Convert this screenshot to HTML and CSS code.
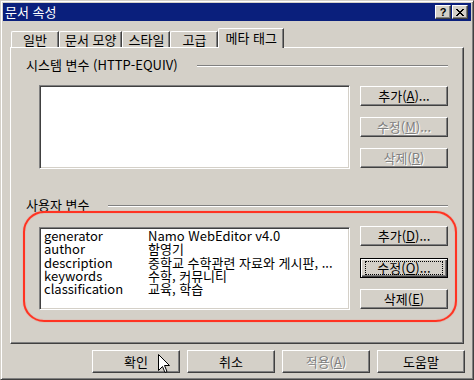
FILE: index.html
```html
<!DOCTYPE html>
<html lang="ko">
<head>
    <meta charset="UTF-8">
    <title>문서 속성</title>
    <link rel="stylesheet" href="styles.css">
</head>
<body>
    <div class="window">
        <div class="titlebar">
            <span class="title">문서 속성</span>
            <div class="title-buttons">
                <span class="tbtn help">?</span>
                <span class="tbtn close">
                    <svg width="8" height="7" viewBox="0 0 8 7"><path d="M0 0h2v1h1v1h2v-1h1v-1h2v1h-1v1h-1v1h-1v1h1v1h1v1h1v1h-2v-1h-1v-1h-2v1h-1v1h-2v-1h1v-1h1v-1h1v-1h-1v-1h-1v-1h-1z" fill="#000"/></svg>
                </span>
            </div>
        </div>

        <div class="tabs">
            <div class="tab">일반</div>
            <div class="tab">문서 모양</div>
            <div class="tab">스타일</div>
            <div class="tab">고급</div>
            <div class="tab active">메타 태그</div>
        </div>

        <div class="panel">
            <!-- system variables -->
            <div class="group">
                <div class="group-title"><span>시스템 변수 (HTTP-EQUIV)</span><i class="etch"></i></div>
                <div class="group-body">
                    <div class="listbox"></div>
                    <div class="side-buttons">
                        <button class="btn">추가(<u>A</u>)...</button>
                        <button class="btn" disabled>수정(<u>M</u>)...</button>
                        <button class="btn" disabled>삭제(<u>R</u>)</button>
                    </div>
                </div>
            </div>

            <!-- user variables -->
            <div class="group user">
                <div class="group-title"><span>사용자 변수</span><i class="etch"></i></div>
                <div class="group-body">
                    <div class="listbox meta-list">
                        <div class="row"><span class="key">generator</span><span>Namo WebEditor v4.0</span></div>
                        <div class="row"><span class="key">author</span><span>함영기</span></div>
                        <div class="row"><span class="key">description</span><span>중학교 수학관련 자료와 게시판, ...</span></div>
                        <div class="row"><span class="key">keywords</span><span>수학, 커뮤니티</span></div>
                        <div class="row"><span class="key">classification</span><span>교육, 학습</span></div>
                    </div>
                    <div class="side-buttons">
                        <button class="btn">추가(<u>D</u>)...</button>
                        <button class="btn focused"><span class="focus-ring">수정(<u>O</u>)...</span></button>
                        <button class="btn">삭제(<u>E</u>)</button>
                    </div>
                </div>
            </div>
        </div>

        <div class="footer">
            <button class="btn big">확인</button>
            <button class="btn big">취소</button>
            <button class="btn big" disabled>적용(<u>A</u>)</button>
            <button class="btn big">도움말</button>
        </div>

        <!-- annotation + pointer -->
        <div class="highlight"></div>
        <svg class="cursor" width="12" height="20" viewBox="0 0 12 20">
            <path d="M0.5 0.5 L0.5 16.5 L4.5 12.5 L7 18.5 L9 17.5 L6.5 11.5 L11.5 11.5 Z" fill="#fff" stroke="#000" stroke-width="1"/>
        </svg>
    </div>
</body>
</html>
```

FILE: styles.css
```css
body {
    margin: 0;
    font-family: "Noto Sans CJK KR", "Noto Sans", sans-serif;
    font-size: 13px;
    color: #000;
    background: #d4d0c8;
}

/* window frame */
.window {
    position: relative;
    width: 474px;
    height: 380px;
    box-sizing: border-box;
    border: 1px solid;
    border-color: #d4d0c8 #404040 #404040 #d4d0c8;
    box-shadow: inset 1px 1px #fff, inset -1px -1px #808080;
    padding: 2px;
    background: #d4d0c8;
    overflow: hidden;
}
.titlebar {
    height: 18px;
    background: #0a1f7c;
    color: #fff;
    display: flex;
    align-items: center;
    justify-content: space-between;
    padding: 0 3px 0 2px;
}
.title {
    font-size: 13px;
    line-height: 18px;
}
.title-buttons {
    display: flex;
    gap: 1px;
}
.tbtn {
    width: 16px;
    height: 14px;
    box-sizing: border-box;
    background: #d4d0c8;
    border: 1px solid;
    border-color: #fff #404040 #404040 #fff;
    box-shadow: inset -1px -1px #808080;
    display: flex;
    align-items: center;
    justify-content: center;
    color: #000;
}
.help {
    font-family: "Liberation Sans", sans-serif;
    font-weight: bold;
    font-size: 11px;
    line-height: 12px;
}

/* tabs */
.tabs {
    display: flex;
    align-items: flex-end;
    height: 19px;
    margin-top: 7px;
    padding-left: 8px;
}
.tab {
    height: 16px;
    min-width: 48px;
    box-sizing: border-box;
    padding: 0 5px;
    text-align: center;
    line-height: 15px;
    border-top: 1px solid #fff;
    border-left: 1px solid #fff;
    border-right: 1px solid #404040;
    border-top-left-radius: 2px;
    box-shadow: inset -1px 0 #808080;
}
.tab.active {
    position: relative;
    z-index: 1;
    height: 20px;
    margin-bottom: -1px;
    padding: 0 6px;
    line-height: 17px;
    background: #d4d0c8;
}

/* tab page */
.panel {
    height: 297px;
    margin: 0 7px;
    box-sizing: border-box;
    border: 1px solid;
    border-color: #fff #404040 #404040 #fff;
    box-shadow: inset -1px -1px #808080;
    padding: 10px 15px 0 15px;
}
.group-title {
    display: flex;
    align-items: center;
    height: 14px;
    line-height: 14px;
}
.etch {
    flex: 1;
    margin-left: 19px;
    margin-top: 2px;
    height: 0;
    border-top: 1px solid #808080;
    border-bottom: 1px solid #fff;
}
.group-body {
    display: flex;
    margin-top: 13px;
    padding-left: 13px;
}
.group.user {
    margin-top: 29px;
}
.group.user .group-body {
    margin-top: 14px;
}
.listbox {
    width: 312px;
    height: 84px;
    box-sizing: border-box;
    background: #fff;
    border: 1px solid;
    border-color: #808080 #fff #fff #808080;
    box-shadow: inset 1px 1px #404040, inset -1px -1px #d4d0c8;
}
.meta-list {
    height: 83px;
    margin-top: 1px;
    padding: 1px 4px;
    white-space: nowrap;
    overflow: hidden;
}
.row {
    display: flex;
    height: 13.3px;
    line-height: 13px;
}
.key {
    flex: none;
    width: 104px;
}
.side-buttons {
    display: flex;
    flex-direction: column;
    gap: 11px;
    margin-left: 10px;
    padding-top: 1px;
}
.group.user .side-buttons {
    padding-top: 0;
    gap: 11.5px;
}

/* buttons */
.btn {
    width: 88px;
    height: 20px;
    box-sizing: border-box;
    margin: 0;
    padding: 0;
    font: inherit;
    line-height: 16px;
    color: #000;
    background: #d4d0c8;
    border: 1px solid;
    border-color: #fff #404040 #404040 #fff;
    box-shadow: inset -1px -1px #808080;
    display: flex;
    align-items: center;
    justify-content: center;
}
.btn u {
    text-underline-offset: 1px;
}
.btn:disabled {
    color: #808080;
    text-shadow: 1px 1px #fff;
}
.btn.focused {
    border-color: #000;
    box-shadow: inset 1px 1px #fff, inset -1px -1px #404040, inset -2px -2px #808080;
}
.focus-ring {
    width: 76px;
    height: 12px;
    line-height: 12px;
    border: 1px dotted #000;
    text-align: center;
}
.footer {
    display: flex;
    justify-content: flex-end;
    gap: 7px;
    margin-top: 6px;
    padding-right: 6px;
}
.btn.big {
    height: 23px;
}

/* red annotation ring */
.highlight {
    position: absolute;
    left: 22px;
    top: 210px;
    width: 434px;
    height: 111px;
    box-sizing: border-box;
    border: 2px solid #ff3322;
    border-radius: 21px;
    box-shadow: 0 0 1px #ff6655, inset 0 0 1px #ff6655;
}
.cursor {
    position: absolute;
    left: 157px;
    top: 353px;
}
```
